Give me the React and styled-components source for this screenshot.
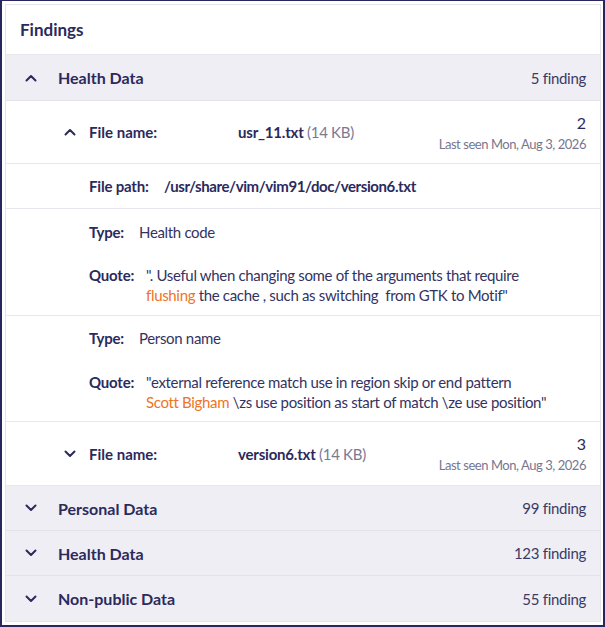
import styled, { createGlobalStyle } from 'styled-components';

const GlobalStyle = createGlobalStyle`
  html, body {
    margin: 0;
    padding: 0;
    background: #ffffff;
  }
  body {
    font-family: Lato, 'Noto Sans', sans-serif;
    color: #2b2a5c;
  }
`;

const Frame = styled.div`
  box-sizing: border-box;
  width: 605px;
  height: 627px;
  border: 2px solid #29255f;
  border-top-width: 1px;
  padding: 3px 2px 2px 3px;
`;

const Card = styled.div`
  border: 1px solid #e5e4ec;
  background: #ffffff;
`;

const Title = styled.div`
  height: 49px;
  display: flex;
  align-items: center;
  padding-left: 14px;
  font-size: 17px;
  font-weight: 700;
  border-bottom: 1px solid #e8e7ee;
`;

const GroupHeader = styled.div`
  height: ${({ $h }) => $h || 44}px;
  display: flex;
  align-items: center;
  padding: 0 14px 0 19px;
  background: #efeef4;
  border-bottom: ${({ $last }) => ($last ? 'none' : '1px solid #e3e2ea')};
`;

const GroupName = styled.span`
  margin-left: 21px;
  font-size: 16px;
  font-weight: 700;
  flex: 1;
`;

const Count = styled.span`
  font-size: 15px;
  letter-spacing: -0.3px;
  color: #3b3a66;
`;

const FileRow = styled.div`
  height: ${({ $h }) => $h}px;
  display: flex;
  align-items: center;
  padding: 0 14px 0 58px;
  border-bottom: 1px solid #e8e7ee;
`;

const FileLabel = styled.span`
  width: 149px;
  margin-left: 13px;
  font-size: 15px;
  font-weight: 700;
`;

const FileName = styled.span`
  flex: 1;
  font-size: 15px;
  font-weight: 700;
  letter-spacing: -0.2px;
`;

const Size = styled.span`
  font-weight: 400;
  letter-spacing: -0.3px;
  color: #7a7993;
`;

const Meta = styled.div`
  display: flex;
  flex-direction: column;
  align-items: flex-end;
  gap: 3px;
  padding-top: ${({ $pt }) => $pt || 0}px;
`;

const MetaCount = styled.span`
  font-size: 16px;
  line-height: 18px;
`;

const LastSeen = styled.span`
  font-size: 13px;
  line-height: 18px;
  letter-spacing: -0.45px;
  color: #77768f;
`;

const PathRow = styled.div`
  height: 44px;
  display: flex;
  align-items: center;
  padding-left: 83px;
  font-size: 15px;
  border-bottom: 1px solid #e8e7ee;
`;

const Label = styled.span`
  font-weight: 700;
  width: ${({ $w }) => $w}px;
  flex-shrink: 0;
  white-space: nowrap;
  letter-spacing: -0.2px;
`;

const PathValue = styled.span`
  font-weight: 700;
  letter-spacing: -0.4px;
`;

const Finding = styled.div`
  display: flex;
  flex-direction: column;
  gap: ${({ $gap }) => $gap}px;
  padding: ${({ $pt }) => $pt}px 0 ${({ $pb }) => $pb}px 83px;
  border-bottom: 1px solid #e8e7ee;
  font-size: 15px;
  line-height: 20px;
`;

const Field = styled.div`
  display: flex;
`;

const Value = styled.span`
  color: #34335f;
  letter-spacing: -0.33px;
`;

const Highlight = styled.span`
  color: #ef7327;
`;

const Chevron = ({ up }) => (
  <svg width="12" height="8" viewBox="0 0 12 8" fill="none">
    <path
      d={up ? 'M1.5 6.5 L6 2 L10.5 6.5' : 'M1.5 1.5 L6 6 L10.5 1.5'}
      stroke="#2b2a5c"
      strokeWidth="2"
      strokeLinecap="round"
      strokeLinejoin="round"
    />
  </svg>
);

export default function App() {
  return (
    <>
      <GlobalStyle />
      <Frame>
        <Card>
          <Title>Findings</Title>

          <GroupHeader $h={45}>
            <Chevron up />
            <GroupName>Health Data</GroupName>
            <Count>5 finding</Count>
          </GroupHeader>

          <FileRow $h={62}>
            <Chevron up />
            <FileLabel>File name:</FileLabel>
            <FileName>
              usr_11.txt <Size>(14 KB)</Size>
            </FileName>
            <Meta $pt={2}>
              <MetaCount>2</MetaCount>
              <LastSeen>Last seen Mon, Aug 3, 2026</LastSeen>
            </Meta>
          </FileRow>

          <PathRow>
            <Label $w={75}>File path:</Label>
            <PathValue>/usr/share/vim/vim91/doc/version6.txt</PathValue>
          </PathRow>

          <Finding $pt={13} $gap={23} $pb={10}>
            <Field>
              <Label $w={50}>Type:</Label>
              <Value>Health code</Value>
            </Field>
            <Field>
              <Label $w={57}>Quote:</Label>
              <Value>
                ". Useful when changing some of the arguments that require
                <br />
                <Highlight>flushing</Highlight> the cache , such as switching&nbsp; from GTK to Motif"
              </Value>
            </Field>
          </Finding>

          <Finding $pt={12} $gap={24} $pb={9}>
            <Field>
              <Label $w={50}>Type:</Label>
              <Value>Person name</Value>
            </Field>
            <Field>
              <Label $w={57}>Quote:</Label>
              <Value>
                "external reference match use in region skip or end pattern
                <br />
                <Highlight>Scott Bigham</Highlight> \zs use position as start of match \ze use position"
              </Value>
            </Field>
          </Finding>

          <FileRow $h={63}>
            <Chevron />
            <FileLabel>File name:</FileLabel>
            <FileName>
              version6.txt <Size>(14 KB)</Size>
            </FileName>
            <Meta $pt={2}>
              <MetaCount>3</MetaCount>
              <LastSeen>Last seen Mon, Aug 3, 2026</LastSeen>
            </Meta>
          </FileRow>

          <GroupHeader>
            <Chevron />
            <GroupName>Personal Data</GroupName>
            <Count>99 finding</Count>
          </GroupHeader>
          <GroupHeader>
            <Chevron />
            <GroupName>Health Data</GroupName>
            <Count>123 finding</Count>
          </GroupHeader>
          <GroupHeader $h={45} $last>
            <Chevron />
            <GroupName>Non-public Data</GroupName>
            <Count>55 finding</Count>
          </GroupHeader>
        </Card>
      </Frame>
    </>
  );
}
